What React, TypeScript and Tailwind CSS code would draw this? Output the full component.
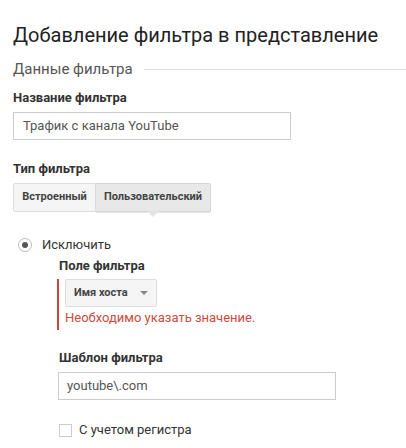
import React from "react"

const Label = ({ children }: { children: React.ReactNode }) => (
  <div className="text-[13px] font-bold leading-[16px] text-[#333]">{children}</div>
)

const App = () => {
  return (
    <div
      className="w-[406px] h-[448px] overflow-hidden bg-white pl-[13px]"
      style={{ fontFamily: "Roboto, 'Noto Sans', sans-serif" }}
    >
      {/* Title */}
      <h1 className="pt-[23px] text-[20px] leading-[24px] text-[#222] whitespace-nowrap">
        Добавление фильтра в представление
      </h1>

      {/* Section header */}
      <div className="mt-[13px] flex items-center gap-[11px]">
        <span className="text-[15px] leading-[18px] text-[#555]">Данные фильтра</span>
        <div className="h-px flex-1 bg-[#ddd]" />
      </div>

      {/* Filter name */}
      <div className="mt-[12px]">
        <Label>Название фильтра</Label>
        <div className="mt-[6px] flex h-[28px] w-[278px] items-center border border-[#ccc] px-[9px] text-[13px] text-[#555]">
          Трафик с канала YouTube
        </div>
      </div>

      {/* Filter type */}
      <div className="mt-[21px]">
        <Label>Тип фильтра</Label>
        <div className="mt-[6px] flex h-[29px] w-[198px] text-[11px] font-bold text-[#444]">
          <div className="flex w-[83px] items-center justify-center rounded-l-[2px] border border-[#ddd] bg-[#f5f5f5]">
            Встроенный
          </div>
          <div className="relative flex flex-1 items-center justify-center rounded-r-[2px] border border-l-0 border-[#d4d4d4] bg-[#e8e8e8] shadow-[0_1px_1px_rgba(0,0,0,0.1)]">
            Пользовательский
            <span className="absolute left-1/2 top-full -ml-[6px] h-0 w-0 border-x-[6px] border-t-[6px] border-x-transparent border-t-[#e4e4e4]" />
          </div>
        </div>
      </div>

      {/* Exclude */}
      <div className="mt-[24px] flex items-center gap-[10px] pl-[5px]">
        <span className="flex h-[14px] w-[14px] items-center justify-center rounded-full border border-[#bbb] bg-white">
          <span className="h-[6px] w-[6px] rounded-full bg-[#555]" />
        </span>
        <span className="text-[13px] leading-[18px] text-[#333]">Исключить</span>
      </div>

      <div className="pl-[46px]">
        {/* Filter field */}
        <div className="mt-[4px]">
          <Label>Поле фильтра</Label>
          <div className="-ml-[2px] mt-[5px] border-l-[2px] border-[#c9463d] pl-[6px] pb-[3px]">
            <div className="flex h-[28px] w-[92px] items-center justify-between rounded-[2px] border border-[#ddd] bg-[#f5f5f5] pl-[8px] pr-[8px] text-[11px] font-bold text-[#444]">
              Имя хоста
              <span className="h-0 w-0 border-x-[4px] border-t-[4px] border-x-transparent border-t-[#888]" />
            </div>
            <div className="mt-[2px] text-[13px] leading-[18px] text-[#cc4a40]">
              Необходимо указать значение.
            </div>
          </div>
        </div>

        {/* Filter pattern */}
        <div className="mt-[20px]">
          <Label>Шаблон фильтра</Label>
          <div className="-ml-[1px] mt-[6px] flex h-[28px] w-[278px] items-center border border-[#ccc] px-[8px] text-[13px] text-[#555]">
            youtube\.com
          </div>
        </div>

        {/* Case sensitive */}
        <div className="mt-[21px] flex items-center gap-[7px]">
          <span className="h-[13px] w-[13px] border border-[#ccc] bg-white" />
          <span className="text-[13px] leading-[18px] text-[#333]">С учетом регистра</span>
        </div>
      </div>
    </div>
  )
}

export default App
